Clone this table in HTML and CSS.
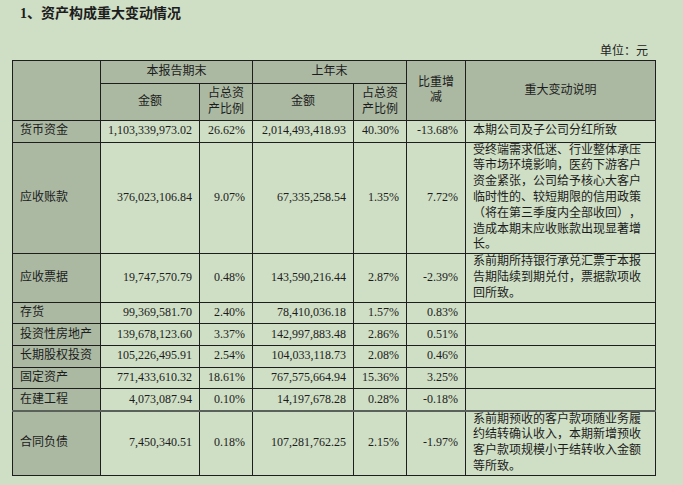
FILE: index.html
```html
<!DOCTYPE html>
<html lang="zh-CN">
<head>
<meta charset="utf-8">
<link rel="stylesheet" href="styles.css">
</head>
<body>
<div class="page">
  <h1 class="title">1、资产构成重大变动情况</h1>
  <div class="unit">单位：元</div>
  <table class="sheet">
    <colgroup>
      <col class="c1"><col class="c2"><col class="c3"><col class="c4"><col class="c5"><col class="c6"><col class="c7">
    </colgroup>
    <thead>
      <tr class="h1">
        <th rowspan="2"></th>
        <th colspan="2">本报告期末</th>
        <th colspan="2">上年末</th>
        <th rowspan="2" class="wrap">比重增<br>减</th>
        <th rowspan="2">重大变动说明</th>
      </tr>
      <tr class="h2">
        <th>金额</th>
        <th class="wrap">占总资<br>产比例</th>
        <th>金额</th>
        <th class="wrap">占总资<br>产比例</th>
      </tr>
    </thead>
    <tbody>
      <tr class="r">
        <th>货币资金</th>
        <td class="n">1,103,339,973.02</td><td class="n">26.62%</td>
        <td class="n">2,014,493,418.93</td><td class="n">40.30%</td>
        <td class="n">-13.68%</td>
        <td class="d">本期公司及子公司分红所致</td>
      </tr>
      <tr>
        <th>应收账款</th>
        <td class="n">376,023,106.84</td><td class="n">9.07%</td>
        <td class="n">67,335,258.54</td><td class="n">1.35%</td>
        <td class="n">7.72%</td>
        <td class="d">受终端需求低迷、行业整体承压等市场环境影响，医药下游客户资金紧张，公司给予核心大客户临时性的、较短期限的信用政策（将在第三季度内全部收回），造成本期末应收账款出现显著增长。</td>
      </tr>
      <tr>
        <th>应收票据</th>
        <td class="n">19,747,570.79</td><td class="n">0.48%</td>
        <td class="n">143,590,216.44</td><td class="n">2.87%</td>
        <td class="n">-2.39%</td>
        <td class="d">系前期所持银行承兑汇票于本报告期陆续到期兑付，票据款项收回所致。</td>
      </tr>
      <tr class="r">
        <th>存货</th>
        <td class="n">99,369,581.70</td><td class="n">2.40%</td>
        <td class="n">78,410,036.18</td><td class="n">1.57%</td>
        <td class="n">0.83%</td>
        <td class="d"></td>
      </tr>
      <tr class="r">
        <th>投资性房地产</th>
        <td class="n">139,678,123.60</td><td class="n">3.37%</td>
        <td class="n">142,997,883.48</td><td class="n">2.86%</td>
        <td class="n">0.51%</td>
        <td class="d"></td>
      </tr>
      <tr class="r">
        <th>长期股权投资</th>
        <td class="n">105,226,495.91</td><td class="n">2.54%</td>
        <td class="n">104,033,118.73</td><td class="n">2.08%</td>
        <td class="n">0.46%</td>
        <td class="d"></td>
      </tr>
      <tr class="r">
        <th>固定资产</th>
        <td class="n">771,433,610.32</td><td class="n">18.61%</td>
        <td class="n">767,575,664.94</td><td class="n">15.36%</td>
        <td class="n">3.25%</td>
        <td class="d"></td>
      </tr>
      <tr class="r">
        <th>在建工程</th>
        <td class="n">4,073,087.94</td><td class="n">0.10%</td>
        <td class="n">14,197,678.28</td><td class="n">0.28%</td>
        <td class="n">-0.18%</td>
        <td class="d"></td>
      </tr>
      <tr class="last">
        <th>合同负债</th>
        <td class="n">7,450,340.51</td><td class="n">0.18%</td>
        <td class="n">107,281,762.25</td><td class="n">2.15%</td>
        <td class="n">-1.97%</td>
        <td class="d">系前期预收的客户款项随业务履约结转确认收入，本期新增预收客户款项规模小于结转收入金额等所致。</td>
      </tr>
    </tbody>
  </table>
</div>
</body>
</html>
```

FILE: styles.css
```css
html, body {
  margin: 0;
  padding: 0;
  background: #cfdfc5;
}
body {
  font-family: "Liberation Serif", "Noto Sans CJK SC", serif;
  color: #1c1c1c;
  width: 683px;
  height: 485px;
  overflow: hidden;
  text-spacing-trim: space-all;
}
.page {
  padding: 4px 28px 0 12px;
}
.title {
  margin: 0 0 0 8px;
  font-size: 14px;
  line-height: 20px;
  font-weight: bold;
  font-family: "Liberation Serif", "Noto Sans CJK SC", sans-serif;
}
.unit {
  margin-top: 19px;
  text-align: right;
  font-size: 12px;
  line-height: 16px;
  padding-right: 7px;
  height: 17px;
}
.sheet {
  border-collapse: collapse;
  table-layout: fixed;
  width: 643px;
  font-size: 12px;
  line-height: 15.8px;
  border: 1.5px solid #1e1e1e;
}
.c1 { width: 88px; }
.c2 { width: 99px; }
.c3 { width: 53px; }
.c4 { width: 101px; }
.c5 { width: 53px; }
.c6 { width: 59px; }
.c7 { width: 190px; }
.sheet th, .sheet td {
  border: 1px solid #1e1e1e;
  padding: 0 7px;
  vertical-align: middle;
}
.sheet th {
  background: #abb9a3;
  font-weight: normal;
}
.sheet thead th {
  text-align: center;
}
.sheet thead .wrap {
  padding: 0 2px;
}
.sheet tbody th {
  text-align: left;
  padding-left: 7px;
  white-space: nowrap;
}
.h1 { height: 22.7px; }
.h2 { height: 37.3px; }
.r { height: 21.7px; }
.n {
  text-align: right;
  white-space: nowrap;
}
.d {
  text-align: left;
  padding: 0 13px 0 7px;
  text-spacing-trim: space-all;
}
.last th, .last td {
  border-top: 2px solid #5a605a;
  height: 62px;
}
```
